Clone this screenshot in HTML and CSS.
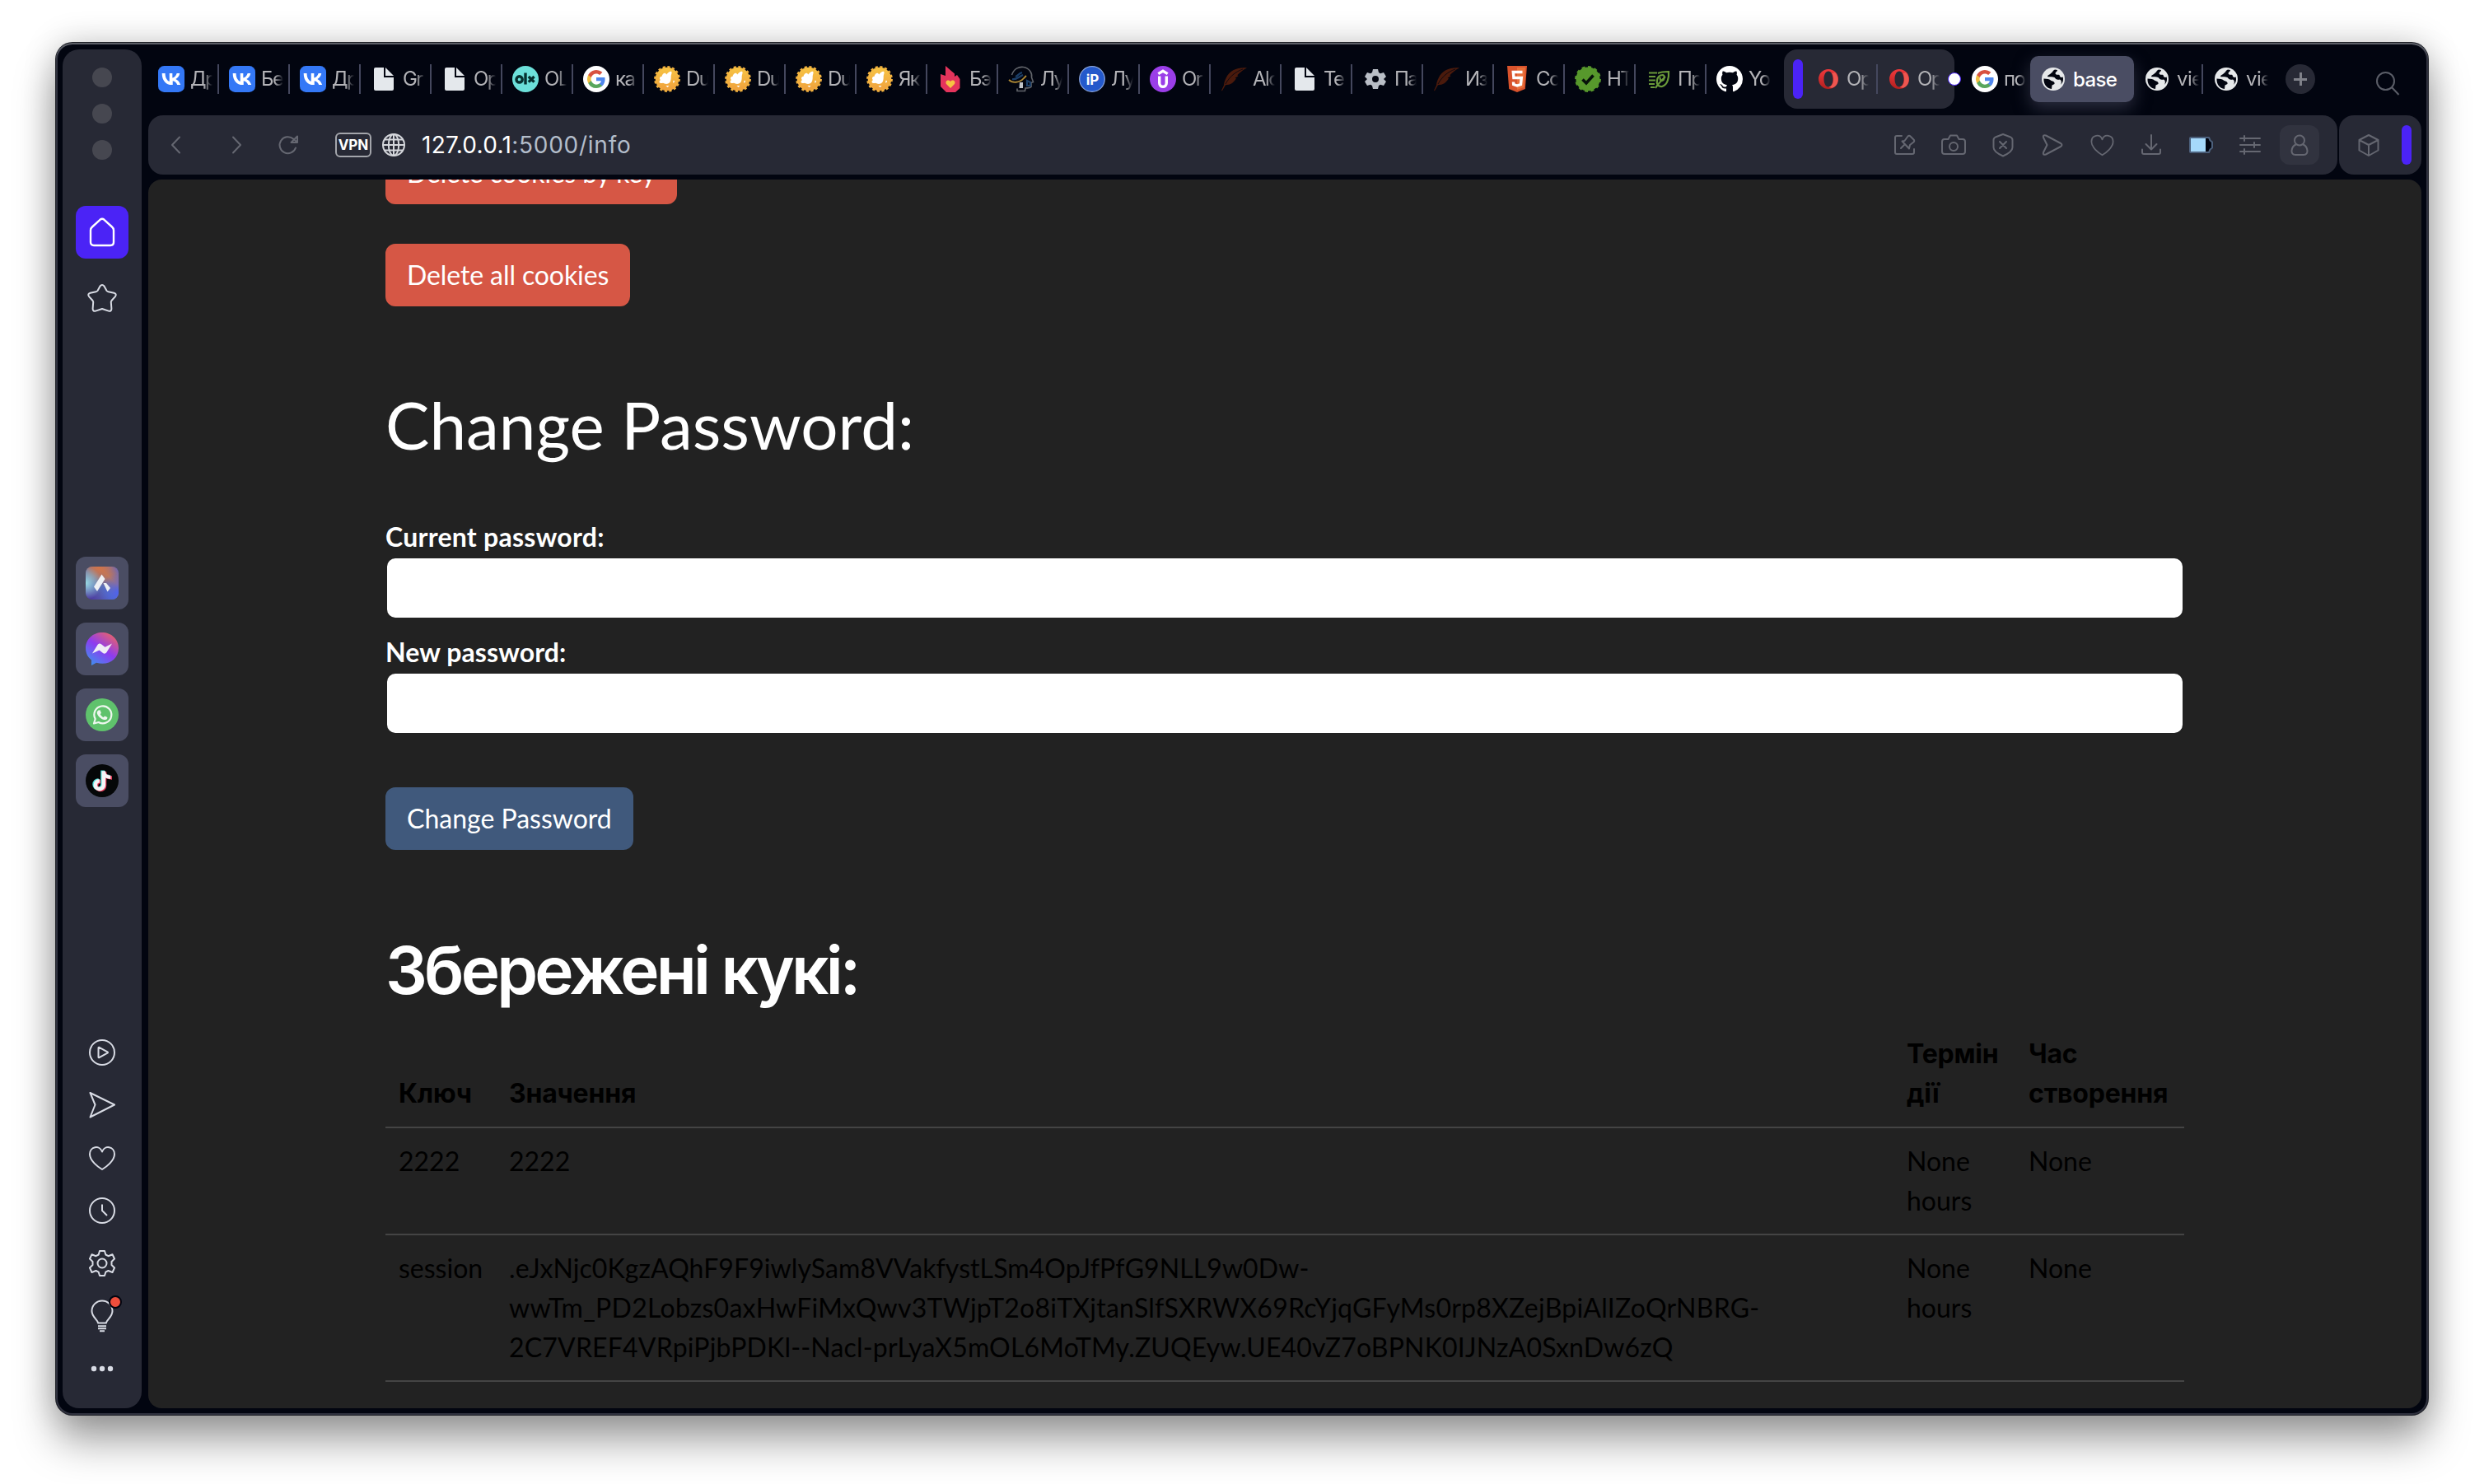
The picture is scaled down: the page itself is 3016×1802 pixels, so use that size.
FILE: index.html
```html
<!DOCTYPE html>
<html lang="uk">
<head>
<meta charset="utf-8">
<title>base</title>
<link rel="stylesheet" href="styles.css">
</head>
<body>
<svg class="sprite" aria-hidden="true">
  <defs>
    <linearGradient id="g-sun" x1="0" y1="0" x2="0" y2="1"><stop offset="0" stop-color="#f7c544"/><stop offset="1" stop-color="#f0a03c"/></linearGradient>
    <linearGradient id="g-opera" x1="0" y1="0" x2="0" y2="1"><stop offset="0" stop-color="#f0393c"/><stop offset="1" stop-color="#b3201f"/></linearGradient>
    <linearGradient id="g-aria" x1="0" y1="1" x2="1" y2="0"><stop offset="0" stop-color="#4a2f9c"/><stop offset=".45" stop-color="#5a6fb4"/><stop offset=".7" stop-color="#b9795f"/><stop offset="1" stop-color="#5a63c8"/></linearGradient>
    <radialGradient id="g-aria-l" cx="0" cy=".5" r=".5"><stop offset="0" stop-color="#9adbe2"/><stop offset="1" stop-color="#9adbe2" stop-opacity="0"/></radialGradient>
    <radialGradient id="g-aria-t" cx=".4" cy="0" r=".6"><stop offset="0" stop-color="#d0744a"/><stop offset="1" stop-color="#d0744a" stop-opacity="0"/></radialGradient>
    <radialGradient id="g-aria-r" cx="1" cy=".8" r=".6"><stop offset="0" stop-color="#4a62f0"/><stop offset="1" stop-color="#4a62f0" stop-opacity="0"/></radialGradient>
    <linearGradient id="g-msg" x1=".15" y1="1" x2=".85" y2="0"><stop offset="0" stop-color="#3b93ee"/><stop offset=".5" stop-color="#8d3bf0"/><stop offset="1" stop-color="#f0665f"/></linearGradient>
  </defs>
  <symbol id="vk" viewBox="0 0 24 24"><rect width="24" height="24" rx="5.5" fill="#3478f6"/><path fill="#fff" d="M12.7 17.3C6.9 17.3 3.6 13.3 3.5 6.7h2.9c.1 4.8 2.2 6.9 3.9 7.3V6.7h2.7v4.2c1.7-.2 3.4-2.1 4-4.2h2.7c-.4 2.6-2.3 4.5-3.7 5.3 1.4.6 3.5 2.3 4.4 5.3h-3c-.6-2-2.2-3.5-4.1-3.7v3.7z"/></symbol>
  <symbol id="doc" viewBox="0 0 32 32"><path fill="#e4e8ec" d="M6 2h10v10h12v16a2 2 0 0 1-2 2H6a2 2 0 0 1-2-2V4a2 2 0 0 1 2-2z"/><path fill="#e4e8ec" d="M18 2l10 10H18z"/><path fill="#020510" d="M16 2h2v10h10v2H16z"/></symbol>
  <symbol id="olx" viewBox="0 0 32 32"><circle cx="16" cy="16" r="16" fill="#6ce0da"/><g fill="none" stroke="#06302f" stroke-width="3.4"><circle cx="8.6" cy="16.4" r="3.6"/><path d="M16 8.500v14M19.800 13l6.800 6.600M26.600 13l-6.800 6.600"/></g></symbol>
  <symbol id="google" viewBox="0 0 32 32"><circle cx="16" cy="16" r="16" fill="#fff"/><g transform="translate(4 4)"><path fill="#4f86ec" d="M22.560 12.250c0-.78-.07-1.530-.2-2.250H12v4.260h5.920a5.060 5.060 0 0 1-2.200 3.320v2.770h3.570c2.080-1.920 3.270-4.740 3.270-8.100z"/><path fill="#58a65c" d="M12 23c2.970 0 5.460-.98 7.280-2.660l-3.570-2.770c-.98.66-2.230 1.060-3.710 1.060-2.860 0-5.290-1.930-6.160-4.530H2.180v2.840A11 11 0 0 0 12 23z"/><path fill="#f1be42" d="M5.840 14.090a6.600 6.600 0 0 1 0-4.180V7.070H2.180a11 11 0 0 0 0 9.860z"/><path fill="#d85140" d="M12 5.380c1.620 0 3.060.56 4.210 1.640l3.150-3.150A11 11 0 0 0 2.180 7.070l3.660 2.840C6.710 7.310 9.140 5.380 12 5.380z"/></g></symbol>
  <symbol id="sun" viewBox="0 0 32 32"><circle cx="16" cy="16" r="14.300" fill="url(#g-sun)"/><circle cx="16" cy="16" r="14.600" fill="none" stroke="#f3b23f" stroke-width="2.600" stroke-dasharray="3.100 2.630"/><path fill="#fff" d="M8 17c-2-1.500-.8-4.500 1.400-4 .4-3 3.200-5.200 4.800-4l1 1.400C17.400 7.400 20.600 5.800 21.400 7.200c.7 1.600-.6 3.400-.7 5.300.1 3.800-.1 8.400-4.400 9.300-2.400.4-4-.6-5.400-1-2.400.8-4.200-.2-4.400-1.400 0-1 .8-1.800 1.500-2.400zM23.800 17.500l1.400 1-1.200 2.300-1-.8zM14.500 24h4l-2 2z"/></symbol>
  <symbol id="flame" viewBox="0 0 32 32"><path fill="#e5345c" d="M10 0l11 9.500V13l3-2 3.500 5v11l-5.500 5H11l-7-7V10l6 2z"/><path fill="#f6c343" d="M16 27l-5-5c-2-3.500 2-6.500 5-3 3-3.500 7-.5 5 3z"/></symbol>
  <symbol id="head" viewBox="0 0 32 32"><path fill="none" stroke="#62656b" stroke-width="1.600" d="M4.500 11C7 3.500 13 .8 18.500 1.500 26 2.500 29.500 9 28.500 14l2 5.500-2.500 1v5c-2 2-5 1-7 1.500l-.5 3.500H11v-3"/><path fill="none" stroke="#1c3f68" stroke-width="2.200" d="M5 16c6 1 8-3 13-5M9 13c3-1 4-4 8-5M23 18v6h4v-4z"/><path fill="none" stroke="#b08a35" stroke-width="1.800" d="M1 17c4 4 13 4 18-2l3-3"/><path fill="#bfc3c8" d="M14 20h4v7h-4.500z"/></symbol>
  <symbol id="ip" viewBox="0 0 32 32"><circle cx="16" cy="16" r="15.300" fill="#2459cb" stroke="#8ca6dc" stroke-width="1.200"/><text x="16.500" y="22.500" text-anchor="middle" class="ip-text">iP</text></symbol>
  <symbol id="udemy" viewBox="0 0 32 32"><circle cx="16" cy="16" r="16" fill="#9b3ee8"/><path fill="none" stroke="#fff" stroke-width="3.400" d="M10.300 9.600L16 6.200l5.700 3.400M11.700 12.500v8.300c0 6 8.600 6 8.600 0v-8.300"/></symbol>
  <symbol id="feather" viewBox="0 0 32 32"><path fill="#4a1a0c" d="M32 2.500C20 1.500 11 6 7 14c-2 4-3 7-3 9.500L1 30l1 .3 4-7c6 0 10-3 13-8l-1.500-.5 4-2.500-1.200-1C24 8 27 4.500 32 2.500z"/><path stroke="#020510" stroke-width=".8" d="M6 22C11 13 18 7 27 4" fill="none"/></symbol>
  <symbol id="gearfill" viewBox="0 0 32 32"><path fill="#b9bec6" fill-rule="evenodd" d="M13 4h6l1 4 2 1.200L26 8l3 5-3 3 3 3-3 5-4-1.200L20 24l-1 4h-6l-1-4-2-1.200L6 24l-3-5 3-3-3-3 3-5 4 1.200L12 8zM16 12a4 4 0 1 0 0 8 4 4 0 0 0 0-8z"/></symbol>
  <symbol id="html5" viewBox="0 0 32 32"><path fill="#d9532c" d="M4 0h24l-2.200 28L16 32l-9.800-4z"/><path fill="#e86f3a" d="M16 2h10l-2 24-8 3z"/><path fill="none" stroke="#fff" stroke-width="3.400" d="M22.500 7.500H11.300l.6 7h9.400l-.8 8-4.500 1.500-4.300-1.500-.2-3"/></symbol>
  <symbol id="check" viewBox="0 0 32 32"><circle cx="16" cy="16" r="14.600" fill="#57982c"/><circle cx="16" cy="16" r="14.600" fill="none" stroke="#57982c" stroke-width="2.600" stroke-dasharray="4 3.600"/><path fill="none" stroke="#07120a" stroke-width="3.600" d="M9.500 16.500l4.500 4.500 8.500-9.500"/></symbol>
  <symbol id="leaf" viewBox="0 0 32 32"><path fill="none" stroke="#6a9a3a" stroke-width="2.200" d="M4 8.500h10M4 13h8M4 17.500h8M4 22h7M6 26h5M15 9c4-2 9-2 13-2 .5 7-1 16-8 18-5 .5-7-3-6-7 0-4 3-7 7-7 3 1 2 6-1 7-2 0-3-2-2-4M12 27c2-4 7-9 12-14"/></symbol>
  <symbol id="github" viewBox="0 0 16 16"><path fill="#fff" d="M8 0C3.580 0 0 3.580 0 8c0 3.540 2.290 6.530 5.470 7.590.4.070.55-.17.55-.38 0-.19-.01-.82-.01-1.490-2.010.37-2.530-.49-2.690-.94-.09-.23-.48-.94-.82-1.130-.28-.15-.68-.52-.01-.53.63-.01 1.080.58 1.230.82.72 1.210 1.870.87 2.330.66.07-.52.28-.87.51-1.070-1.780-.2-3.640-.89-3.640-3.950 0-.87.31-1.590.82-2.150-.08-.2-.36-1.020.08-2.120 0 0 .67-.21 2.200.82.64-.18 1.320-.27 2-.27s1.360.09 2 .27c1.530-1.040 2.200-.82 2.200-.82.44 1.100.16 1.920.08 2.120.51.56.82 1.270.82 2.150 0 3.070-1.870 3.750-3.650 3.950.29.25.54.73.54 1.480 0 1.070-.01 1.930-.01 2.200 0 .21.15.46.55.38A8.010 8.010 0 0 0 16 8c0-4.420-3.580-8-8-8z"/></symbol>
  <symbol id="opera" viewBox="0 0 32 32"><path fill="url(#g-opera)" fill-rule="evenodd" d="M16 4a12 12 0 1 0 0 24 12 12 0 0 0 0-24zM16 6.500c3.300 0 5.500 4.200 5.500 9.500s-2.200 9.500-5.500 9.500-5.500-4.200-5.500-9.500 2.200-9.500 5.500-9.500z"/><path fill="#ee5650" d="M16.500 25.500c5-.5 7.500-9 4-16.500l3.500-1c5.500 6 4.500 14.500-1 17.800-2.500 1.400-5 1-6.500-.3z"/></symbol>
  <symbol id="earth" viewBox="0 0 32 32"><circle cx="16" cy="16" r="14" fill="#e6e8ea"/><path class="sea" d="M4.500 15.500c4 .2 7 .5 9 2.500 3 1 4.500 1.500 4 4l-3 1.500-.5 4.500C8 27.500 4 22 4.500 15.500zM18 4.500c-3 1-2 3-5 4.500-1 2-3.500 1.500-4 4 2 1 5-.5 8.500 1 1.500 2 3 3.500 6.500 2.500 2 1 2.500 4 1 6.500 3-3 3.500-6 2.700-9.500-2 1-4 0-4.200-2.500-2-.5-4.500.5-5-2 .5-2 2.500-2 2.500-4z"/></symbol>

  <symbol id="back" viewBox="0 0 32 32"><path d="M21 6.500L12 16l9 9.500"/></symbol>
  <symbol id="fwd" viewBox="0 0 32 32"><path d="M11 6.500l9 9.500-9 9.500"/></symbol>
  <symbol id="reload" viewBox="0 0 32 32"><path d="M25 19.500A10 10 0 1 1 22 8.500l4 3.500M27 5.500V13h-7.500z"/></symbol>
  <symbol id="web" viewBox="0 0 32 32"><circle cx="16" cy="16" r="13"/><ellipse cx="16" cy="16" rx="6.200" ry="13"/><path d="M3 16h26M16 3v26M5 9.500h22M5 22.500h22"/></symbol>
  <symbol id="edit" viewBox="0 0 32 32"><path d="M13 5H7a2 2 0 0 0-2 2v18a2 2 0 0 0 2 2h19a2 2 0 0 0 2-2v-4M12 20l5-5M13.500 11.500l3-.5 4-5.500q1.500-1.500 3 0l4 4q1.500 1.500 0 3l-4.500 3.500-1 4.500z"/></symbol>
  <symbol id="camera" viewBox="0 0 32 32"><path d="M5 9h4.500L12 4.500h8L22.500 9H27a3 3 0 0 1 3 3v12a3 3 0 0 1-3 3H5a3 3 0 0 1-3-3V12a3 3 0 0 1 3-3z"/><circle cx="16" cy="18" r="5"/></symbol>
  <symbol id="shield" viewBox="0 0 32 32"><path d="M16 3l8.500 3.200Q27.500 7.500 27.500 10v9c0 4.500-7 8.500-11.500 10.500C11.500 27.500 4.500 23.500 4.500 19v-9Q4.500 7.500 7.500 6.200zM12 12l8 8M20 12l-8 8"/></symbol>
  <symbol id="myflow" viewBox="0 0 32 32"><path d="M8 4.500l18 9.500q3 2 0 4L8 27.500q-4 1-3-2.500l4.500-9L5 7q-1-3.500 3-2.500z"/></symbol>
  <symbol id="heart" viewBox="0 0 32 32"><path d="M16 30C11 27 1 19.500 1 11.500 1 2 13 0 16 8.500 19 0 31 2 31 11.500 31 19.500 21 27 16 30z"/></symbol>
  <symbol id="download" viewBox="0 0 32 32"><path d="M16 4v17M9.500 15l6.500 6.500 6.500-6.500M5 21.500V25a2 2 0 0 0 2 2h18a2 2 0 0 0 2-2v-3.500"/></symbol>
  <symbol id="battery" viewBox="0 0 32 32"><path fill="#020510" stroke="#4c607c" stroke-width="2" d="M4 7h22l1.500 3.500 2.500 2v7l-2.500 2L26 25H4a1 1 0 0 1-1-1V8a1 1 0 0 1 1-1z"/><path fill="#a6d9fb" stroke="none" d="M4 8h18v16H4z"/></symbol>
  <symbol id="sliders" viewBox="0 0 32 32"><path d="M4 8h24M4 16h24M4 24h24M9 5v6M21 13v6M9 21v6"/></symbol>
  <symbol id="user" viewBox="0 0 32 32"><circle cx="16" cy="10.500" r="6"/><path d="M11.500 15.500C6 18 4 28 11 28h10c7 0 5-10-.5-12.500"/></symbol>
  <symbol id="cube" viewBox="0 0 32 32"><path d="M16 4l11.500 6v12.500L16 29 4.500 22.500V10zM4.500 10L16 16l11.500-6M16 16v13"/></symbol>
  <symbol id="search" viewBox="0 0 32 32"><circle cx="13.500" cy="12.500" r="10.500"/><path d="M21 20l8.500 9"/></symbol>

  <symbol id="home" viewBox="0 0 40 40"><path d="M8 13.500L17.500 4.800q2.500-2 5 0L32 13.500q2 1.700 2 4V32q0 4-4 4H10q-4 0-4-4V17.500q0-2.300 2-4z"/></symbol>
  <symbol id="star" viewBox="0 0 40 40"><path d="M17.500 5.500q2.500-3 5 0l3 5.500q.8 1 2 1.200l7 1.600q3.500 1.200 1.600 4L31.500 23q-.8 1-.7 2l.6 8q-.2 3.500-3.500 2.600L20 33l-7.900 2.600q-3.300.9-3.500-2.600l.6-8q.1-1-.7-2L3.900 17.800q-1.900-2.800 1.600-4l7-1.600q1.200-.2 2-1.200z"/></symbol>
  <symbol id="play" viewBox="0 0 32 32"><circle cx="16" cy="16" r="15"/><path d="M11.500 10.500v11q0 1 1 .7l10-5.500q1-.7 0-1.400l-10-5.500q-1-.4-1 .7z"/></symbol>
  <symbol id="plane" viewBox="0 0 32 32"><path d="M1.500 1L31 15.500 1.500 30.500 7.500 15.500z"/></symbol>
  <symbol id="clock" viewBox="0 0 32 32"><circle cx="16" cy="16" r="15"/><path d="M16 8.500V16l6 6"/></symbol>
  <symbol id="gear" viewBox="0 0 32 32"><path d="M13 1h6l1.300 4.500 3.200 1.700 5-2L31 10.500 27.500 14v4l3.500 3.500-2.500 5.500-5-2-3.200 1.700L19 31h-6l-1.300-4.300L8.500 25l-5 2L1 21.500 4.500 18v-4L1 10.500l2.500-5.300 5 2 3.200-1.700z"/><circle cx="16" cy="16" r="5.500"/></symbol>
  <symbol id="bulb" viewBox="0 0 32 40"><path d="M11 28.500c0-4-7.500-7-7.500-14.500a12.500 12.500 0 0 1 25 0c0 7.500-7.500 10.500-7.500 14.500zM11 32.300h10M11 35.200h10M13 38.200h6"/></symbol>
  <symbol id="dots" viewBox="0 0 32 32"><g fill="#d8dbe4" stroke="none"><circle cx="6" cy="16" r="3.200"/><circle cx="16" cy="16" r="3.200"/><circle cx="26" cy="16" r="3.200"/></g></symbol>

  <symbol id="aria" viewBox="0 0 40 40"><rect width="40" height="40" rx="8" fill="url(#g-aria)"/><rect width="40" height="40" rx="8" fill="url(#g-aria-t)"/><rect width="40" height="40" rx="8" fill="url(#g-aria-l)"/><rect width="40" height="40" rx="8" fill="url(#g-aria-r)"/><path fill="#eef0f4" d="M19.500 9.500l4 5.500L14 30l-4-5.500zM21.500 20l3.500 0 5 6-3.500 4.500z"/></symbol>
  <symbol id="messenger" viewBox="0 0 40 40"><path fill="url(#g-msg)" d="M20 0C9 0 0 8 0 19c0 6 2.500 11 7 14.500V40l6-3.200C28 41 40 32 40 19 40 8 31 0 20 0z"/><path fill="#f0eef6" d="M8 25.500L14.500 15c1.300-1.800 3-2 4.500-.8l4.500 3.500L32 13.500 25.500 24c-1.300 1.900-3 2.200-4.500 1L16.500 21.500z"/></symbol>
  <symbol id="whatsapp" viewBox="0 0 40 40"><circle cx="20" cy="20" r="20" fill="#5fc26c"/><path fill="none" stroke="#eef7ef" stroke-width="2.200" d="M10 30.500l1.700-5.500a10.500 10.500 0 1 1 4 4z"/><path fill="#eef7ef" d="M15.500 14.500l2-.2 1.400 3.400-1.200 1.600c1 2 2.300 3 4 3.800l1.500-1.700 3.200 1.500c.3 3-3 3.700-5 2.900-4-1.400-7.500-5-7.700-8.500 0-1.200 1-2.300 1.800-2.800z"/></symbol>
  <symbol id="tiktok" viewBox="0 0 40 40"><circle cx="20" cy="20" r="20" fill="#050708"/><g fill="none" stroke-width="4.600"><path stroke="#55e6e2" d="M20.600 7.500v17a5 5 0 1 1-5-5M20.600 8.500c0 3.500 3 6.500 8 6.500"/><path stroke="#ea3e5c" d="M23 9v17a5 5 0 1 1-5-5M23 10c0 3.500 3 6.500 9 6.500"/><path stroke="#f4f4f6" d="M21.800 8.200v17a5 5 0 1 1-5-5M21.800 9.200c0 3.500 3 6.500 8.500 6.500"/></g></symbol>
</svg>

<div class="window">
  <aside class="sidebar">
    <div class="lights"><i></i><i></i><i></i></div>
    <nav class="pinned">
      <a class="tile tile-home"><svg><use href="#home"/></svg></a>
      <a class="tile"><svg><use href="#star"/></svg></a>
    </nav>
    <nav class="apps">
      <a class="tile tile-app"><svg><use href="#aria"/></svg></a>
      <a class="tile tile-app"><svg><use href="#messenger"/></svg></a>
      <a class="tile tile-app"><svg><use href="#whatsapp"/></svg></a>
      <a class="tile tile-app"><svg><use href="#tiktok"/></svg></a>
    </nav>
    <nav class="tools">
      <a><svg><use href="#play"/></svg></a>
      <a><svg><use href="#plane"/></svg></a>
      <a><svg><use href="#heart"/></svg></a>
      <a><svg><use href="#clock"/></svg></a>
      <a><svg><use href="#gear"/></svg></a>
      <a class="tip"><svg class="bulb"><use href="#bulb"/></svg><i class="alert"></i></a>
      <a><svg><use href="#dots"/></svg></a>
    </nav>
  </aside>

  <div class="main">
    <header class="tabs">
      <div class="tab"><svg><use href="#vk"/></svg><span>Др</span></div>
      <div class="tab"><svg><use href="#vk"/></svg><span>Бе</span></div>
      <div class="tab"><svg><use href="#vk"/></svg><span>Др</span></div>
      <div class="tab"><svg><use href="#doc"/></svg><span>Gr</span></div>
      <div class="tab"><svg><use href="#doc"/></svg><span>Ор</span></div>
      <div class="tab"><svg><use href="#olx"/></svg><span>OL</span></div>
      <div class="tab"><svg><use href="#google"/></svg><span>ка</span></div>
      <div class="tab"><svg><use href="#sun"/></svg><span>Du</span></div>
      <div class="tab"><svg><use href="#sun"/></svg><span>Du</span></div>
      <div class="tab"><svg><use href="#sun"/></svg><span>Du</span></div>
      <div class="tab"><svg><use href="#sun"/></svg><span>Як</span></div>
      <div class="tab"><svg><use href="#flame"/></svg><span>Бэ</span></div>
      <div class="tab"><svg><use href="#head"/></svg><span>Лу</span></div>
      <div class="tab"><svg><use href="#ip"/></svg><span>Лу</span></div>
      <div class="tab"><svg><use href="#udemy"/></svg><span>Or</span></div>
      <div class="tab"><svg><use href="#feather"/></svg><span>Alc</span></div>
      <div class="tab"><svg><use href="#doc"/></svg><span>Te</span></div>
      <div class="tab"><svg><use href="#gearfill"/></svg><span>Па</span></div>
      <div class="tab"><svg><use href="#feather"/></svg><span>Из</span></div>
      <div class="tab"><svg><use href="#html5"/></svg><span>Co</span></div>
      <div class="tab"><svg><use href="#check"/></svg><span>HT</span></div>
      <div class="tab"><svg><use href="#leaf"/></svg><span>Пр</span></div>
      <div class="tab tab-last"><svg><use href="#github"/></svg><span>Yo</span></div>
      <div class="island">
        <i class="handle"></i>
        <div class="tab"><svg><use href="#opera"/></svg><span>Op</span></div>
        <div class="tab tab-last"><svg><use href="#opera"/></svg><span>Op</span></div>
        <i class="island-dot"></i>
      </div>
      <div class="tab tab-search"><svg><use href="#google"/></svg><span>по</span></div>
      <div class="tab-active"><svg><use href="#earth"/></svg><b>base</b></div>
      <div class="tab tab-view"><svg><use href="#earth"/></svg><span>vie</span></div>
      <div class="tab tab-view tab-last"><svg><use href="#earth"/></svg><span>vie</span></div>
      <button class="new-tab" aria-label="New tab"></button>
      <svg class="tab-find"><use href="#search"/></svg>
    </header>

    <div class="bars">
      <div class="address">
        <svg class="nav back"><use href="#back"/></svg>
        <svg class="nav fwd"><use href="#fwd"/></svg>
        <svg class="nav reload"><use href="#reload"/></svg>
        <span class="vpn">VPN</span>
        <svg class="site"><use href="#web"/></svg>
        <span class="url"><b>127.0.0.1</b>:5000/info</span>
        <div class="actions">
          <i><svg><use href="#edit"/></svg></i>
          <i><svg><use href="#camera"/></svg></i>
          <i><svg><use href="#shield"/></svg></i>
          <i><svg><use href="#myflow"/></svg></i>
          <i><svg class="small-heart"><use href="#heart"/></svg></i>
          <i><svg><use href="#download"/></svg></i>
          <i><svg><use href="#battery"/></svg></i>
          <i><svg><use href="#sliders"/></svg></i>
          <i><em><svg><use href="#user"/></svg></em></i>
        </div>
      </div>
      <div class="extension"><svg><use href="#cube"/></svg><i class="handle"></i></div>
    </div>

    <main class="page">
      <div class="container">
        <button class="btn btn-danger btn-key">Delete cookies by key</button>
        <button class="btn btn-danger">Delete all cookies</button>
        <h1>Change Password:</h1>
        <form>
          <label class="label-current">Current password:</label>
          <input type="password">
          <label>New password:</label>
          <input type="password">
          <button class="btn btn-primary" type="button">Change Password</button>
        </form>
        <h1 class="cookies-title">Збережені кукі:</h1>
        <table>
          <colgroup><col class="c-key"><col><col class="c-term"><col class="c-time"></colgroup>
          <thead><tr><th>Ключ</th><th>Значення</th><th>Термін<br>дії</th><th>Час<br>створення</th></tr></thead>
          <tbody>
            <tr><td>2222</td><td>2222</td><td>None<br>hours</td><td>None</td></tr>
            <tr><td>session</td><td class="token"><span>.eJxNjc0KgzAQhF9F9iwlySam8VVakfystLSm4OpJfPfG9NLL9w0Dw-</span><span>wwTm_PD2Lobzs0axHwFiMxQwv3TWjpT2o8iTXjtanSlfSXRWX69RcYjqGFyMs0rp8XZejBpiAlIZoQrNBRG-</span><span>2C7VREF4VRpiPjbPDKl--Nacl-prLyaX5mOL6MoTMy.ZUQEyw.UE40vZ7oBPNK0IJNzA0SxnDw6zQ</span></td><td>None<br>hours</td><td>None</td></tr>
          </tbody>
        </table>
      </div>
    </main>
  </div>
</div>
</body>
</html>
```

FILE: styles.css
```css
* { box-sizing: border-box; }
body {
  margin: 0;
  width: 3016px;
  height: 1802px;
  padding: 52px 68px 84px;
  background: #fff;
  overflow: hidden;
  font-family: Inter, "Noto Sans", sans-serif;
}
svg { display: block; flex: none; }
i, em, b { font-style: normal; }
.sprite { position: absolute; width: 0; height: 0; }
.ip-text { font: 700 17px Inter, sans-serif; fill: #fff; }

.window {
  display: flex;
  gap: 8px;
  width: 2880px;
  height: 1666px;
  padding: 8px;
  background: #020510;
  border-radius: 20px;
  box-shadow: 0 0 0 1px #22242a, inset 0 2px 0 #5b5e66, inset 0 0 0 2px #30323f,
    0 32px 50px rgba(0, 0, 0, .36), 0 0 40px rgba(0, 0, 0, .2);
}

/* Sidebar */
.sidebar {
  display: flex;
  flex-direction: column;
  align-items: center;
  width: 96px;
  padding-top: 22px;
  background: #272935;
  border-radius: 20px;
}
.sidebar svg { fill: none; stroke: #d8dbe4; stroke-width: 2; stroke-linejoin: round; }
.lights { display: flex; flex-direction: column; gap: 20px; }
.lights i { width: 24px; height: 24px; border-radius: 50%; background: #464750; }
.pinned { display: flex; flex-direction: column; gap: 16px; margin-top: 56px; }
.tile { display: flex; align-items: center; justify-content: center; width: 64px; height: 64px; border-radius: 12px; }
.tile svg { width: 40px; height: 40px; }
.tile-home { background: #4b23f6; }
.tile-home svg { stroke: #fff; stroke-width: 2.4; }
.tile-app { background: #4a4d63; }
.tile-app svg { stroke: none; }
.apps { display: flex; flex-direction: column; gap: 16px; margin-top: 282px; }
.tools { display: flex; flex-direction: column; margin-top: 266px; }
.tools a { position: relative; display: flex; align-items: center; justify-content: center; width: 64px; height: 64px; }
.tools svg { width: 32px; height: 32px; }
.tools .bulb { height: 40px; }
.alert {
  position: absolute;
  left: 40px;
  top: 7px;
  width: 16px;
  height: 16px;
  border: 2px solid #020510;
  border-radius: 50%;
  background: #ef4e3c;
}

/* Tab strip */
.main { display: flex; flex-direction: column; width: 2760px; }
.tabs { display: flex; align-items: center; height: 72px; }
.tab {
  position: relative;
  display: flex;
  align-items: center;
  width: 86px;
  height: 36px;
  padding-left: 12px;
  border-right: 2px solid #44475d;
  flex: none;
}
.tab-last, .tab-search { border-right-color: transparent; }
.tab svg { width: 32px; height: 32px; }
.tab span {
  width: 27px;
  margin-left: 7px;
  overflow: hidden;
  white-space: nowrap;
  font-size: 24px;
  line-height: 36px;
  letter-spacing: -1.6px;
  color: #b4b4b8;
  -webkit-mask-image: linear-gradient(90deg, #000 60%, transparent);
  mask-image: linear-gradient(90deg, #000 60%, transparent);
}
.sea { fill: #020510; }
.island {
  position: relative;
  display: flex;
  align-items: center;
  width: 207px;
  height: 72px;
  margin-left: 8px;
  padding-left: 11px;
  border-radius: 16px;
  background: #272935;
  flex: none;
}
.handle { width: 12px; height: 48px; border-radius: 6px; background: #4b23f6; }
.island .tab { padding-left: 15px; width: 91px; }
.island .tab-last { padding-left: 10px; width: 86px; }
.island .tab span { margin-left: 6px; }
.island-dot {
  position: absolute;
  left: 199px;
  top: 28px;
  width: 16px;
  height: 16px;
  border: 1px solid #4b23f6;
  border-radius: 50%;
  background: #fff;
}
.tab-search { width: 92px; padding-left: 21px; }
.tab-active {
  display: flex;
  align-items: center;
  gap: 8px;
  width: 126px;
  height: 56px;
  padding-left: 12px;
  border-radius: 10px;
  background: #4a4d63;
  box-shadow: 0 8px 20px rgba(74, 77, 99, .55);
  flex: none;
}
.tab-active svg { width: 32px; height: 32px; }
.tab-active .sea { fill: #4a4d63; }
.tab-active b { font-size: 24px; font-weight: 500; color: #fff; letter-spacing: -.6px; }
.tab-view { width: 84px; }
.tab-view span { margin-left: 8px; letter-spacing: -.6px; }
.new-tab {
  width: 36px;
  height: 36px;
  margin-left: 16px;
  border: 0;
  border-radius: 50%;
  background:
    linear-gradient(#80828a, #80828a) center / 16px 3px no-repeat,
    linear-gradient(#80828a, #80828a) center / 3px 16px no-repeat,
    #272935;
}
.tab-find { width: 32px; height: 32px; margin: 12px 0 0 72px; fill: none; stroke: #5b5e68; stroke-width: 2; }

/* Address bar */
.bars { display: flex; gap: 2px; height: 72px; margin-top: 8px; }
.address, .extension { display: flex; align-items: center; background: #272935; border-radius: 18px; }
.address { width: 2658px; padding-left: 17px; }
.address svg, .extension svg { width: 32px; height: 32px; fill: none; stroke: #656771; stroke-width: 2; stroke-linejoin: round; stroke-linecap: round; }
.address .fwd { margin-left: 43px; }
.address .reload { margin-left: 30px; }
.vpn {
  width: 44px;
  height: 30px;
  margin-left: 41px;
  border: 2px solid #a3a5ab;
  border-radius: 6px;
  font-size: 17px;
  font-weight: 700;
  line-height: 26px;
  text-align: center;
  color: #fff;
}
.address .site { margin-left: 11px; stroke: #d4d6db; }
.url { margin-left: 18px; font-size: 28px; line-height: 36px; letter-spacing: .75px; color: #b3bdca; }
.url b { font-weight: 400; letter-spacing: .3px; color: #fff; }
.actions { display: flex; margin-left: auto; padding-right: 16px; }
.actions i { display: flex; align-items: center; justify-content: center; width: 60px; height: 72px; }
.actions em { display: flex; align-items: center; justify-content: center; width: 48px; height: 48px; border-radius: 12px; background: #31333f; }
.address .small-heart { width: 29px; height: 28px; }
.extension { width: 100px; padding-left: 20px; }
.extension .handle { margin-left: 24px; }

/* Page */
.page {
  height: 1492px;
  margin-top: 6px;
  overflow: hidden;
  border-radius: 16px;
  background: #222;
  font-family: Lato, Inter, sans-serif;
}
.container { width: 2184px; margin: -46px 0 0 288px; font-size: 32px; line-height: 48px; }
.btn {
  display: block;
  height: 76px;
  padding: 12px 24px;
  border: 2px solid transparent;
  border-radius: 12px;
  font: 400 32px/48px Lato, sans-serif;
  color: #fff;
}
.btn-danger { margin-bottom: 48px; background: #d65745; border-color: #d65745; letter-spacing: -.1px; }
.btn-key { letter-spacing: -.18px; }
.btn-primary { margin-top: 64px; background: #40597c; border-color: #40597c; }
h1 { margin: 0; font-size: 80px; font-weight: 400; line-height: 96px; color: #fff; }
.btn + h1 { margin-top: 95px; }
form { margin-top: 65px; }
label { display: block; width: 700px; height: 48px; font-weight: 700; letter-spacing: .1px; color: #fff; }
.label-current { letter-spacing: .26px; }
input {
  display: block;
  width: 2184px;
  height: 76px;
  border: 2px solid #222;
  border-radius: 12px;
  background: #fff;
}
label:not(:first-child) { margin-top: 16px; }
.cookies-title { margin-top: 98px; font-family: Inter, sans-serif; font-weight: 600; letter-spacing: -3.8px; }
table { width: 2184px; margin-top: 14px; border-collapse: separate; border-spacing: 0; table-layout: fixed; color: #000; }
.c-key { width: 134px; }
.c-term { width: 148px; }
.c-time { width: 205px; }
th, td { padding: 16px; border-bottom: 2px solid #444; text-align: left; vertical-align: top; white-space: nowrap; }
th { vertical-align: bottom; font-family: Inter, sans-serif; font-weight: 700; letter-spacing: -.2px; }
.token span { display: block; letter-spacing: .08px; }
.token span:nth-child(2) { letter-spacing: .25px; }
.token span:nth-child(3) { letter-spacing: .18px; }
```
